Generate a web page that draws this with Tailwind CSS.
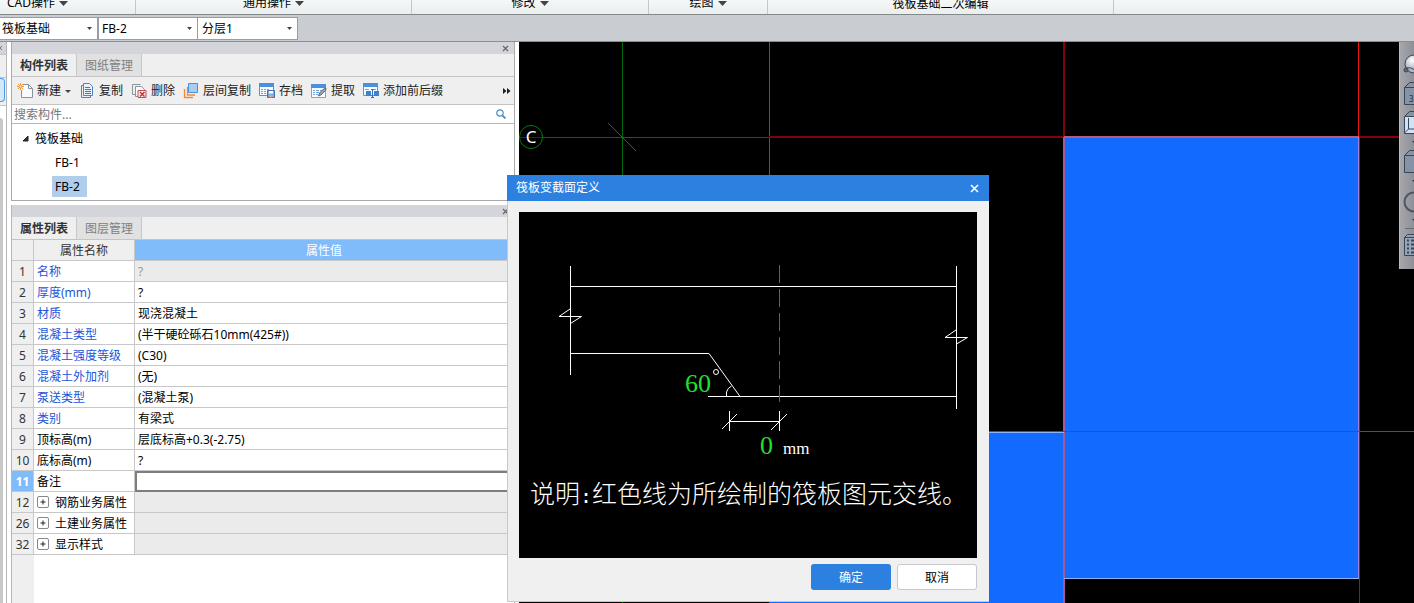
<!DOCTYPE html>
<html lang="zh-CN">
<head>
<meta charset="utf-8">
<title>筏板变截面定义</title>
<script src="https://cdn.jsdelivr.net/npm/@tailwindcss/browser@4"></script>
</head>
<body class="flex h-screen flex-col overflow-hidden bg-white font-['Noto_Sans','Noto_Sans_CJK_SC',sans-serif] text-xs text-black">

<!-- Ribbon group captions -->
<nav class="flex h-[15px] shrink-0 flex-col justify-end overflow-hidden border-b border-[#858889] bg-linear-to-b from-[#f6f8f8] to-[#e9eeee] leading-4">
  <div class="grid h-[19px] shrink-0 grid-cols-[136px_276px_237px_119px_346px_1fr] items-stretch">
    <div class="flex items-start justify-start border-r border-[#c3c8c8] pl-[7px]"><button class="flex items-center gap-1 whitespace-nowrap">CAD操作<svg class="size-[9px]" viewBox="0 0 9 9"><path d="M0 2h9L4.500 7z" fill="#444"/></svg></button></div>
    <div class="flex items-start justify-center border-r border-[#c3c8c8]"><button class="flex items-center gap-1 whitespace-nowrap">通用操作<svg class="size-[9px]" viewBox="0 0 9 9"><path d="M0 2h9L4.500 7z" fill="#444"/></svg></button></div>
    <div class="flex items-start justify-center border-r border-[#c3c8c8]"><button class="flex items-center gap-1 whitespace-nowrap">修改<svg class="size-[9px]" viewBox="0 0 9 9"><path d="M0 2h9L4.500 7z" fill="#444"/></svg></button></div>
    <div class="flex items-start justify-center border-r border-[#c3c8c8]"><button class="flex items-center gap-1 whitespace-nowrap">绘图<svg class="size-[9px]" viewBox="0 0 9 9"><path d="M0 2h9L4.500 7z" fill="#444"/></svg></button></div>
    <div class="flex items-start justify-center border-r border-[#c3c8c8] pt-px"><span class="whitespace-nowrap">筏板基础二次编辑</span></div>
  </div>
</nav>

<!-- Component selectors -->
<div class="flex h-[27px] shrink-0 items-center border-b border-[#8b8e90] bg-[#c9cdd1]">
  <label class="relative block"><select aria-label="构件类型" class="block h-[23px] w-[98px] appearance-none border border-l-0 border-[#999da1] bg-white pt-px pl-[2px] leading-5"><option>筏板基础</option></select><svg class="pointer-events-none absolute top-[10px] right-[6px] h-[3px] w-[5px]" viewBox="0 0 5 3"><path d="M0 0h5L2.500 3z" fill="#444"/></svg></label>
  <label class="relative block"><select aria-label="构件" class="block h-[23px] w-[100px] appearance-none border border-[#999da1] bg-white pt-px pl-[3px] leading-5"><option>FB-2</option></select><svg class="pointer-events-none absolute top-[10px] right-[6px] h-[3px] w-[5px]" viewBox="0 0 5 3"><path d="M0 0h5L2.500 3z" fill="#444"/></svg></label>
  <label class="relative block"><select aria-label="分层" class="block h-[23px] w-[100px] appearance-none border border-l-0 border-[#999da1] bg-white pt-px pl-[4px] leading-5"><option>分层1</option></select><svg class="pointer-events-none absolute top-[10px] right-[6px] h-[3px] w-[5px]" viewBox="0 0 5 3"><path d="M0 0h5L2.500 3z" fill="#444"/></svg></label>
</div>

<main class="relative flex min-h-0 flex-1">

  <!-- Edge of the docked navigation pane -->
  <div class="flex w-[7px] shrink-0 flex-col overflow-hidden border-r border-[#b4b6b9]">
    <div class="h-3 bg-[#d3d5da]"><svg class="h-3 w-1" viewBox="0 0 4 12"><path d="M2 4L-2 8M-2 4L2 8" stroke="#777"/></svg></div>
    <div class="h-6 border-y border-[#c4c4c4] bg-[#efefef]"></div>
    <div class="h-7 border-b border-[#c4c4c4] bg-[#efefef]"><div class="h-6 w-[5px] rounded-r border border-l-0 border-[#4c9be8] bg-[#d5e8fb]"></div></div>
    <div class="mt-3 w-[3px] flex-1 rounded-tr bg-[#c8c8c8]"></div>
  </div>

  <div class="ml-1 flex w-[504px] shrink-0 flex-col">
    <!-- Component list -->
    <section class="flex flex-col border-x border-b border-[#a8aaac]">
      <header class="flex h-3 items-center justify-end bg-[#d3d5da] pr-[5px]"><button aria-label="关闭"><svg class="block size-[7px]" viewBox="0 0 7 7"><path d="M1 1l5 5M6 1L1 6" stroke="#666" stroke-width="1.200"/></svg></button></header>
      <div class="flex h-[23px] items-stretch border-b border-[#c4c4c4] bg-[#efefef]">
        <button class="w-[65px] border-r border-[#c8c8c8] pt-[2px] font-bold text-[#333]">构件列表</button>
        <button class="w-[65px] border-r border-[#c8c8c8] bg-[#e1e1e1] pt-[2px] text-[#808080]">图纸管理</button>
      </div>
      <div class="flex h-7 items-center gap-2 border-b border-[#c4c4c4] bg-[#efefef] pt-px pr-[3px] pl-[5px] text-[#222]">
        <button class="flex items-center gap-1 whitespace-nowrap"><svg class="size-4" viewBox="0 0 16 16" fill="none"><path d="M5.500 1.500h6l4 4v9h-11V7" fill="#fafafa" stroke="#8a94a0"/><path d="M11.500 1.500v4h4" stroke="#8a94a0"/><path d="M3.500 0v7M0 3.500h7M1 1l5 5M6 1L1 6" stroke="#f0953a"/><circle cx="3.500" cy="3.500" r="1" fill="#fff0c0"/></svg>新建<svg class="h-[3px] w-[6px]" viewBox="0 0 6 3"><path d="M0 0h6L3 3z" fill="#444"/></svg></button>
        <button class="flex items-center gap-1 whitespace-nowrap"><svg class="size-4" viewBox="0 0 16 16" fill="none" stroke="#4a86c0"><path d="M11.500 12.500v2h-9v-12H4"/><path d="M4.500.500h6l3 3v9h-9z" fill="#eaf3fc"/><path d="M6 4.500h5M6 6.500h6M6 8.500h6M6 10.500h6" stroke="#3a7cc4"/></svg>复制</button>
        <button class="flex items-center gap-1 whitespace-nowrap"><svg class="size-4" viewBox="0 0 16 16" fill="none" stroke="#8a94a0"><path d="M4 11.500H1.500v-10h8"/><path d="M7 13.500H4.500v-10h6l3 3V8" fill="#fafafa"/><path d="M7 7.500h8v7H7z" fill="#fbeaea" stroke="#c0504d"/><path d="M9 9l4.500 4.500M13.500 9L9 13.500" stroke="#c0302c" stroke-width="1.400"/></svg>删除</button>
        <button class="flex items-center gap-1 whitespace-nowrap"><svg class="size-4" viewBox="0 0 16 16" fill="none"><path d="M1.500 6v8.500H10M4.500 4v8H12" stroke="#ee8a3a" stroke-width="1.300"/><path d="M5.500.500h9v9h-9z" fill="#a9cdf5" stroke="#4a90dc"/></svg>层间复制</button>
        <button class="flex items-center gap-1 whitespace-nowrap"><svg class="size-4" viewBox="0 0 16 16" fill="none"><path d="M.500 1.500h14v11H.500z" fill="#f8fbff" stroke="#5b93d0"/><path d="M0 0h15v4H0z" fill="#4a90dc"/><path d="M2 6.500h2m1 0h2m1 0h2M2 8.500h2m1 0h2M2 10.500h2m1 0h2" stroke="#6ea3dc"/><path d="M8.500 7.500h7v7h-7z" fill="#7fa9dc" stroke="#3e6fae"/><path d="M10 8h4v2.500h-4z" fill="#fff"/><path d="M10.500 12h3v2.500h-3z" fill="#f3a060"/></svg>存档</button>
        <button class="flex items-center gap-1 whitespace-nowrap"><svg class="size-4" viewBox="0 0 16 16" fill="none"><path d="M.500 2.500h14v12H.500z" fill="#f8fbff" stroke="#7ba7d6"/><path d="M0 1h15v4H0z" fill="#4a90dc"/><path d="M2 7.500h2m1 0h3m1 0h2M2 9.500h2m1 0h3M2 11.500h2m1 0h2" stroke="#6ea3dc"/><path d="M7.500 13l1-3 4-4 2.500-1-.500 2.500-4.500 4.500z" fill="#9aa4b0" stroke="#555" stroke-width=".800"/></svg>提取</button>
        <button class="flex items-center gap-1 whitespace-nowrap"><svg class="size-4" viewBox="0 0 16 16" fill="none"><path d="M.500 1.500h14v11H.500z" fill="#f8fbff" stroke="#5b93d0"/><path d="M0 0h15v4H0z" fill="#4a90dc"/><path d="M2 6.500h4M9 6.500h4" stroke="#6ea3dc"/><path d="M3 8h5v5H3zM11 8h5v5h-5z" fill="#3d82cf"/><path d="M8 6.500h3M9.500 6.500v8M8 14.500h3" stroke="#2f6fb8"/></svg>添加前后缀</button>
        <button aria-label="更多" class="ml-auto"><svg class="h-[6px] w-2" viewBox="0 0 8 6"><path d="M0 0l3.500 3L0 6zM4 0l3.500 3L4 6z" fill="#222"/></svg></button>
      </div>
      <label class="flex h-[19px] items-center border-b border-[#b8b8b8] bg-white pr-2 pl-[2px]"><input type="search" aria-label="搜索构件" placeholder="搜索构件..." class="min-w-0 flex-1 pt-px leading-4 outline-none placeholder:text-[#777]"><svg class="size-[10px]" viewBox="0 0 10 10" fill="none" stroke="#4a90c8"><circle cx="4" cy="4" r="3.200" stroke-width="1.200"/><path d="M6.500 6.500L9.500 9.500" stroke-width="1.800"/></svg></label>
      <ul class="h-[76px] bg-white pt-[2px] leading-[21px]">
        <li class="flex h-6 items-center gap-[6px] pl-[10px]"><svg class="size-[7px]" viewBox="0 0 7 7"><path d="M6 1v5H1z" fill="#333" stroke="#222"/></svg>筏板基础</li>
        <li class="flex h-6 items-center pl-10"><span class="px-[3px]">FB-1</span></li>
        <li class="flex h-6 items-center pl-10"><span class="bg-[#b0cdec] pr-[7px] pl-[3px]">FB-2</span></li>
      </ul>
    </section>

    <!-- Property list -->
    <section class="mt-1 flex min-h-0 flex-1 flex-col border-x border-[#b4b6b9]">
      <header class="flex h-3 shrink-0 items-center justify-end bg-[#d3d5da] pr-[5px]"><button aria-label="关闭"><svg class="block size-[7px]" viewBox="0 0 7 7"><path d="M1 1l5 5M6 1L1 6" stroke="#666" stroke-width="1.200"/></svg></button></header>
      <div class="flex h-[23px] shrink-0 items-stretch border-b border-[#c4c4c4] bg-[#efefef]">
        <button class="w-[65px] border-r border-[#c8c8c8] pt-[2px] font-bold text-[#333]">属性列表</button>
        <button class="w-[65px] border-r border-[#c8c8c8] bg-[#e1e1e1] pt-[2px] text-[#808080]">图层管理</button>
      </div>
      <table class="w-full table-fixed border-separate border-spacing-0 leading-[18px] [&_td]:h-[21px] [&_td]:border-b [&_td]:border-[#c8c8c8] [&_td]:p-0 [&_td]:pt-[2px] [&_td]:pl-[3px] [&_th]:h-[21px] [&_th]:border-r [&_th]:border-b [&_th]:border-[#c8c8c8] [&_th]:p-0 [&_th]:pt-[2px] [&_th]:font-normal">
        <colgroup><col class="w-[22px]"><col class="w-[101px]"><col></colgroup>
        <thead><tr class="bg-[#efefef] text-[#333]"><th></th><th>属性名称</th><th class="bg-[#80bbfa] text-white">属性值</th></tr></thead>
        <tbody>
          <tr><th class="bg-[#efefef] text-[#333]">1</th><td class="border-r text-[#2055d8]">名称</td><td class="bg-[#ebebeb] text-[#999]">?</td></tr>
          <tr><th class="bg-[#efefef] text-[#333]">2</th><td class="border-r text-[#2055d8]">厚度(mm)</td><td>?</td></tr>
          <tr><th class="bg-[#efefef] text-[#333]">3</th><td class="border-r text-[#2055d8]">材质</td><td>现浇混凝土</td></tr>
          <tr><th class="bg-[#efefef] text-[#333]">4</th><td class="border-r text-[#2055d8]">混凝土类型</td><td>(半干硬砼砾石10mm(425#))</td></tr>
          <tr><th class="bg-[#efefef] text-[#333]">5</th><td class="border-r text-[#2055d8]">混凝土强度等级</td><td>(C30)</td></tr>
          <tr><th class="bg-[#efefef] text-[#333]">6</th><td class="border-r text-[#2055d8]">混凝土外加剂</td><td>(无)</td></tr>
          <tr><th class="bg-[#efefef] text-[#333]">7</th><td class="border-r text-[#2055d8]">泵送类型</td><td>(混凝土泵)</td></tr>
          <tr><th class="bg-[#efefef] text-[#333]">8</th><td class="border-r text-[#2055d8]">类别</td><td>有梁式</td></tr>
          <tr><th class="bg-[#efefef] text-[#333]">9</th><td class="border-r">顶标高(m)</td><td>层底标高+0.3(-2.75)</td></tr>
          <tr><th class="bg-[#efefef] text-[#333]">10</th><td class="border-r">底标高(m)</td><td>?</td></tr>
          <tr><th class="bg-[#80bbfa] text-white"><b>11</b></th><td class="border-r">备注</td><td class="border-b-0! pt-0! pl-0!"><input aria-label="备注" class="block h-[21px] w-full border-2 border-[#7d7d7d] bg-white px-1 outline-none"></td></tr>
          <tr><th class="bg-[#efefef] text-[#333]">12</th><td class="border-r"><button class="flex items-center gap-[6px]"><svg class="mb-[2px] size-[12px]" viewBox="0 0 12 12" fill="none"><rect x=".500" y=".500" width="11" height="11" rx="1.500" stroke="#888"/><path d="M3.500 6h5M6 3.500v5" stroke="#222"/></svg>钢筋业务属性</button></td><td class="bg-[#ebebeb]"></td></tr>
          <tr><th class="bg-[#efefef] text-[#333]">26</th><td class="border-r"><button class="flex items-center gap-[6px]"><svg class="mb-[2px] size-[12px]" viewBox="0 0 12 12" fill="none"><rect x=".500" y=".500" width="11" height="11" rx="1.500" stroke="#888"/><path d="M3.500 6h5M6 3.500v5" stroke="#222"/></svg>土建业务属性</button></td><td class="bg-[#ebebeb]"></td></tr>
          <tr><th class="bg-[#efefef] text-[#333]">32</th><td class="border-r"><button class="flex items-center gap-[6px]"><svg class="mb-[2px] size-[12px]" viewBox="0 0 12 12" fill="none"><rect x=".500" y=".500" width="11" height="11" rx="1.500" stroke="#888"/><path d="M3.500 6h5M6 3.500v5" stroke="#222"/></svg>显示样式</button></td><td class="bg-[#ebebeb]"></td></tr>
        </tbody>
      </table>
      <div class="w-[22px] flex-1 bg-[#efefef]"></div>
    </section>
  </div>

  <!-- Model canvas -->
  <div class="ml-1 min-w-0 flex-1 overflow-hidden bg-black">
    <svg class="block h-full w-full" fill="none">
      <path d="M545 95h295v442h-295zM250 390h295v300h-295z" fill="#126aff"/>
      <path d="M103.500 0v700M24 95.500h226" stroke="#006a0a"/>
      <path d="M0 95.500h24" stroke="#004406"/>
      <path d="M89 81l28 28" stroke="#008a10"/>
      <circle cx="12" cy="95" r="11.500" stroke="#0a7a14"/>
      <path d="M250.500 0v700M839.500 0v95" stroke="#f01414"/>
      <path d="M250 95h630M545 0v95" stroke="#84000a" stroke-width="2"/>
      <path d="M545 95h295" stroke="#b85a80" stroke-width="2"/>
      <path d="M545 95v600" stroke="#a85a98" stroke-width="2"/>
      <path d="M839.500 95v442" stroke="#a080d8"/>
      <path d="M840.500 95v600" stroke="#b00a18"/>
      <path d="M469 390.500h76M545 536.500h295" stroke="#8cb4f4"/>
      <path d="M469 389.500h430" stroke="#d8142c"/>
      <text x="12" y="101" text-anchor="middle" fill="#fff" font-size="17">C</text>
    </svg>
  </div>

  <!-- View toolbar floating over the canvas -->
  <aside class="absolute top-0 right-0 h-[227px] w-[15px] overflow-hidden border-l border-[#b8bac0] bg-linear-to-r from-[#a6a7ad] to-[#8e9097]">
    <svg class="h-[227px] w-[30px]" viewBox="0 0 30 227" fill="none" stroke="#3a4654">
      <defs><radialGradient id="ball" cx=".4" cy=".3"><stop offset="0" stop-color="#fff"/><stop offset="1" stop-color="#aab4c4"/></radialGradient></defs>
      <circle cx="14" cy="22" r="9" fill="url(#ball)"/><circle cx="6" cy="28" r="2" fill="#667"/><path d="M6 26c5-1 9 1 12 6"/>
      <path d="M4.500 45.500l5-5h20M4.500 45.500h25v17h-25z" fill="#8493a8"/>
      <path d="M4.500 74.500l5-5h20v5" fill="#8493a8"/><path d="M4.500 74.500h25v17h-25z" fill="#cfe2f8"/><path d="M8.500 76v11h20M8.500 87l-4 4"/>
      <path d="M12 99h6l-3 3z" fill="#334" stroke="none"/>
      <path d="M4.500 113.500l5-5h20M4.500 113.500h25v17h-25z" fill="#8493a8"/>
      <path d="M12 138h6l-3 3z" fill="#334" stroke="none"/>
      <circle cx="14" cy="160" r="9.500" stroke="#50545c" stroke-width="2"/>
      <path d="M12 177h6l-3 3z" fill="#334" stroke="none"/>
      <path d="M5 186.500h25" stroke="#6a6c74"/>
      <path d="M4.500 195.500l3-3h20M4.500 195.500h25v18h-25z" fill="#93a5bb"/><path d="M7 198.500h2m2 0h4M7 202.500h2m2 0h4M7 206.500h2m2 0h4M7 210.500h2m2 0h4" stroke-width="2"/>
      <text x="9" y="60" font-size="8" fill="#222c38" stroke="none">3</text>
    </svg>
  </aside>

  <!-- Section change dialog -->
  <section role="dialog" aria-label="筏板变截面定义" class="absolute top-[133px] left-[507px] w-[482px] border-b border-l border-[#c8c8c8] bg-[#f0f0f0]">
    <header class="-ml-px flex h-[26px] items-center justify-between bg-[#2c80e0] pr-[10px] pl-[9px] text-white"><h1>筏板变截面定义</h1><button aria-label="关闭"><svg class="block size-[9px]" viewBox="0 0 9 9"><path d="M1 1l7 7M8 1L1 8" stroke="#fff" stroke-width="1.600"/></svg></button></header>
    <div class="pt-[11px] pr-3 pb-[11px] pl-[11px]">
      <svg class="block h-[346px] w-full bg-black" viewBox="0 0 458 346" fill="none" stroke="#fff" font-family="Liberation Serif, Noto Sans CJK SC, serif">
        <path d="M51.500 54v109M51 74.500h387M437.500 54v143M51 141.500h139M189 184.500h248"/>
        <path d="M190 141.500l31 43M207.500 184v-4q1-4 5-6"/>
        <path d="M51 97l-11 7.500h22.500l-11 7M437 118l-11 7.500h22.500l-11 6.500"/>
        <path d="M210.500 199v20M260.500 199v20M210 209.500h50M218 202l-15 15M268 202l-16 16"/>
        <circle cx="197" cy="160" r="2.500"/>
        <path d="M260.500 53v137" stroke="#ff1c1c" stroke-dasharray="18 6"/>
        <g stroke="none">
          <text x="166" y="180" font-size="26" fill="#20e030">60</text>
          <text x="241" y="242" font-size="26" fill="#20e030">0</text>
          <text x="264" y="242" font-size="17" fill="#fff">mm</text>
          <text x="11" y="291" font-size="25" font-weight="300" fill="#fff">说明<tspan font-family="DejaVu Sans Mono" font-size="20">:</tspan>红色线为所绘制的筏板图元交线。</text>
        </g>
      </svg>
      <div class="mt-[6px] flex justify-end gap-[6px]">
        <button class="h-[26px] w-20 rounded-[3px] bg-[#2c80e0] pt-[2px] text-white">确定</button>
        <button class="h-[26px] w-20 rounded-[3px] border border-[#c4c8cc] bg-white pt-[2px]">取消</button>
      </div>
    </div>
  </section>
</main>
</body>
</html>
